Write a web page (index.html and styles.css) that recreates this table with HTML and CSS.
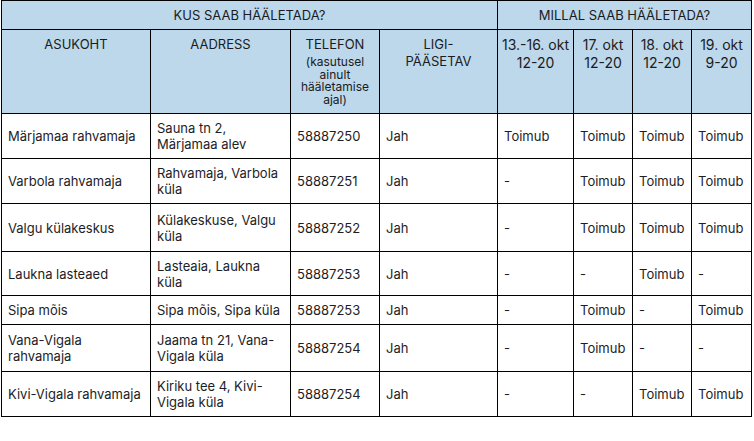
FILE: index.html
```html
<!DOCTYPE html>
<html lang="et">
<head>
<meta charset="utf-8">
<title>Hääletamine</title>
<link rel="stylesheet" href="styles.css">
</head>
<body>
<table class="vote">
  <colgroup>
    <col class="c-place"><col class="c-addr"><col class="c-tel"><col class="c-access">
    <col class="c-d1"><col class="c-d2"><col class="c-d3"><col class="c-d4">
  </colgroup>
  <thead>
    <tr class="head-top">
      <th colspan="4">KUS SAAB HÄÄLETADA?</th>
      <th colspan="4">MILLAL SAAB HÄÄLETADA?</th>
    </tr>
    <tr class="head-sub">
      <th>ASUKOHT</th>
      <th>AADRESS</th>
      <th>TELEFON<span class="note">(kasutusel ainult hääletamise ajal)</span></th>
      <th>LIGI-<br>PÄÄSETAV</th>
      <th class="date">13.-16. okt<br>12-20</th>
      <th class="date wsep">17. okt<br>12-20</th>
      <th class="date wsep">18. okt<br>12-20</th>
      <th class="date wsep">19. okt<br>9-20</th>
    </tr>
  </thead>
  <tbody>
    <tr class="r2">
      <td>Märjamaa rahvamaja</td><td>Sauna tn 2,<br>Märjamaa alev</td><td>58887250</td><td>Jah</td>
      <td>Toimub</td><td>Toimub</td><td>Toimub</td><td>Toimub</td>
    </tr>
    <tr class="r2">
      <td>Varbola rahvamaja</td><td>Rahvamaja, Varbola<br>küla</td><td>58887251</td><td>Jah</td>
      <td>-</td><td>Toimub</td><td>Toimub</td><td>Toimub</td>
    </tr>
    <tr class="r2 taller">
      <td>Valgu külakeskus</td><td>Külakeskuse, Valgu<br>küla</td><td>58887252</td><td>Jah</td>
      <td>-</td><td>Toimub</td><td>Toimub</td><td>Toimub</td>
    </tr>
    <tr class="r2 short">
      <td>Laukna lasteaed</td><td>Lasteaia, Laukna<br>küla</td><td>58887253</td><td>Jah</td>
      <td>-</td><td>-</td><td>Toimub</td><td>-</td>
    </tr>
    <tr class="r1">
      <td>Sipa mõis</td><td>Sipa mõis, Sipa küla</td><td>58887253</td><td>Jah</td>
      <td>-</td><td>Toimub</td><td>-</td><td>Toimub</td>
    </tr>
    <tr class="r2 tall">
      <td>Vana-Vigala<br>rahvamaja</td><td>Jaama tn 21, Vana-<br>Vigala küla</td><td>58887254</td><td>Jah</td>
      <td>-</td><td>Toimub</td><td>-</td><td>-</td>
    </tr>
    <tr class="r2">
      <td>Kivi-Vigala rahvamaja</td><td>Kiriku tee 4, Kivi-<br>Vigala küla</td><td>58887254</td><td>Jah</td>
      <td>-</td><td>-</td><td>Toimub</td><td>Toimub</td>
    </tr>
  </tbody>
</table>
</body>
</html>
```
FILE: styles.css
```css
html, body {
  margin: 0;
  padding: 0;
  background: #ffffff;
}
body {
  font-family: "Inter", "Liberation Sans", sans-serif;
  font-size: 13px;
  color: #1d1d26;
}
.vote {
  border-collapse: collapse;
  table-layout: fixed;
  width: 751px;
  margin: 0 0 0 1px;
}
.c-place { width: 149px; }
.c-addr { width: 140px; }
.c-tel { width: 89px; }
.c-access { width: 118px; }
.c-d1 { width: 76px; }
.c-d2 { width: 59px; }
.c-d3 { width: 59px; }
.c-d4 { width: 60px; }

.vote th, .vote td {
  border: 1px solid #000;
  padding: 0 6px;
  overflow: hidden;
}
.vote th {
  background: #bcd8ea;
  font-weight: 400;
  color: #1b1b22;
}
.head-top th {
  height: 28px;
  line-height: 17px;
  font-size: 13px;
  text-align: center;
  vertical-align: middle;
}
.head-sub th {
  height: 84px;
  box-sizing: border-box;
  padding-top: 6px;
  vertical-align: top;
  text-align: center;
  line-height: 17px;
  font-size: 13px;
}
.head-sub th.date {
  font-size: 14px;
  line-height: 18px;
  padding-left: 2px;
  padding-right: 2px;
}
.head-sub th.wsep {
  border-left-color: #ffffff;
}
.note {
  display: block;
  font-size: 12px;
  line-height: 12.5px;
  margin-top: 3px;
  margin-left: -4px;
  margin-right: -4px;
}
.vote td {
  vertical-align: middle;
  line-height: 16px;
  text-align: left;
}
.r2 td { height: 44px; }
.r2.tall td { height: 46px; }
.r2.taller td { height: 47px; }
.r2.short td { height: 43px; }
.r1 td { height: 28px; }
```
